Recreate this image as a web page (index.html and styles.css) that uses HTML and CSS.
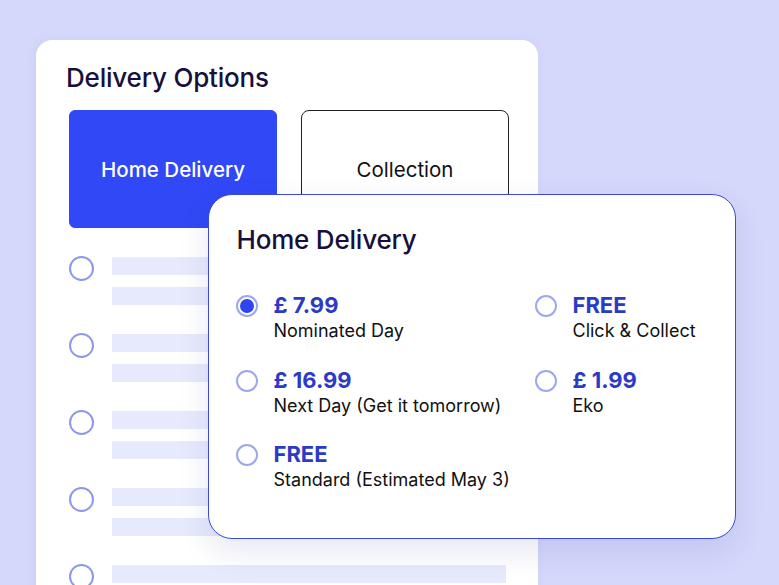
FILE: index.html
```html
<!DOCTYPE html>
<html lang="en">
<head>
<meta charset="utf-8">
<title>Delivery Options</title>
<link rel="stylesheet" href="styles.css">
</head>
<body>
<div class="stage">
  <section class="card">
    <h1 class="card-title">Delivery Options</h1>
    <div class="tabs">
      <div class="tab tab-active">Home Delivery</div>
      <div class="tab">Collection</div>
    </div>
    <div class="ph-list">
      <div class="ph-row"><span class="ph-radio"></span><div class="ph-lines"><span class="ph-bar"></span><span class="ph-bar"></span></div></div>
      <div class="ph-row"><span class="ph-radio"></span><div class="ph-lines"><span class="ph-bar"></span><span class="ph-bar"></span></div></div>
      <div class="ph-row"><span class="ph-radio"></span><div class="ph-lines"><span class="ph-bar"></span><span class="ph-bar"></span></div></div>
      <div class="ph-row"><span class="ph-radio"></span><div class="ph-lines"><span class="ph-bar"></span><span class="ph-bar"></span></div></div>
      <div class="ph-row"><span class="ph-radio"></span><div class="ph-lines"><span class="ph-bar"></span><span class="ph-bar"></span></div></div>
    </div>
  </section>

  <section class="popup">
    <h2 class="popup-title">Home Delivery</h2>
    <div class="options">
      <div class="option">
        <span class="radio radio-checked"></span>
        <div class="option-text"><div class="price">£ 7.99</div><div class="desc">Nominated Day</div></div>
      </div>
      <div class="option">
        <span class="radio"></span>
        <div class="option-text"><div class="price">FREE</div><div class="desc">Click &amp; Collect</div></div>
      </div>
      <div class="option">
        <span class="radio"></span>
        <div class="option-text"><div class="price">£ 16.99</div><div class="desc">Next Day (Get it tomorrow)</div></div>
      </div>
      <div class="option">
        <span class="radio"></span>
        <div class="option-text"><div class="price">£ 1.99</div><div class="desc">Eko</div></div>
      </div>
      <div class="option">
        <span class="radio"></span>
        <div class="option-text"><div class="price">FREE</div><div class="desc">Standard (Estimated May 3)</div></div>
      </div>
    </div>
  </section>
</div>
</body>
</html>
```

FILE: styles.css
```css
* { box-sizing: border-box; }

html, body {
  margin: 0;
  padding: 0;
}

body {
  background: #d5d8fb;
  font-family: Inter, "Noto Sans", "Liberation Sans", sans-serif;
  color: #111;
}

.stage {
  position: relative;
  width: 779px;
  height: 585px;
  overflow: hidden;
  padding: 40px 0 0 36px;
}

.card {
  width: 502px;
  height: 600px;
  background: #fff;
  border-radius: 16px;
  padding: 23px 32px 0 33px;
  box-shadow: -2px 0 10px rgba(90, 100, 200, 0.08);
}

.card-title {
  margin: 0 0 0 -3px;
  font-size: 26px;
  line-height: 30px;
  font-weight: 500;
  color: #180f3d;
  letter-spacing: -0.2px;
}

.tabs {
  display: grid;
  grid-template-columns: 208px 208px;
  gap: 24px;
  margin-top: 17px;
}

.tab {
  height: 118px;
  display: flex;
  align-items: center;
  justify-content: center;
  font-size: 20.5px;
  font-weight: 400;
  color: #111;
  border: 1.5px solid #222;
  border-radius: 8px;
}

.tab-active {
  background: #3048f5;
  border-color: #3048f5;
  color: #fff;
  font-weight: 500;
  border-radius: 6px;
}

.ph-list {
  display: flex;
  flex-direction: column;
  gap: 28px;
  margin-top: 28px;
}

.ph-row {
  display: flex;
  gap: 18px;
}

.ph-radio {
  flex: none;
  width: 25px;
  height: 25px;
  border: 2.5px solid #8e97ea;
  border-radius: 50%;
}

.ph-lines {
  display: flex;
  flex-direction: column;
  gap: 12px;
  padding-top: 1px;
}

.ph-bar {
  display: block;
  width: 394px;
  height: 18px;
  background: #e7eafc;
}

.popup {
  position: absolute;
  left: 208px;
  top: 194px;
  width: 528px;
  height: 345px;
  background: #fff;
  border: 1.5px solid #3a4ad6;
  border-radius: 24px;
  padding: 30px 20px 0 27.5px;
  box-shadow: 0 12px 30px rgba(50, 60, 160, 0.12);
}

.popup-title {
  margin: 0;
  font-size: 26px;
  line-height: 30px;
  font-weight: 500;
  color: #180f3d;
  letter-spacing: -0.2px;
}

.options {
  display: grid;
  grid-template-columns: 299px 1fr;
  row-gap: 22.5px;
  margin-top: 37px;
  margin-left: -1px;
}

.option {
  display: flex;
  gap: 16px;
}

.radio {
  flex: none;
  width: 22px;
  height: 22px;
  margin-top: 3px;
  border: 2px solid #9ea6ef;
  border-radius: 50%;
}

.radio-checked {
  padding: 2px;
  border-width: 2.5px;
  background: #2f45ee;
  background-clip: content-box;
}

.price {
  font-size: 22px;
  line-height: 26px;
  font-weight: 700;
  color: #2c3bc6;
}

.desc {
  font-size: 18px;
  line-height: 26px;
  color: #111;
}
```
